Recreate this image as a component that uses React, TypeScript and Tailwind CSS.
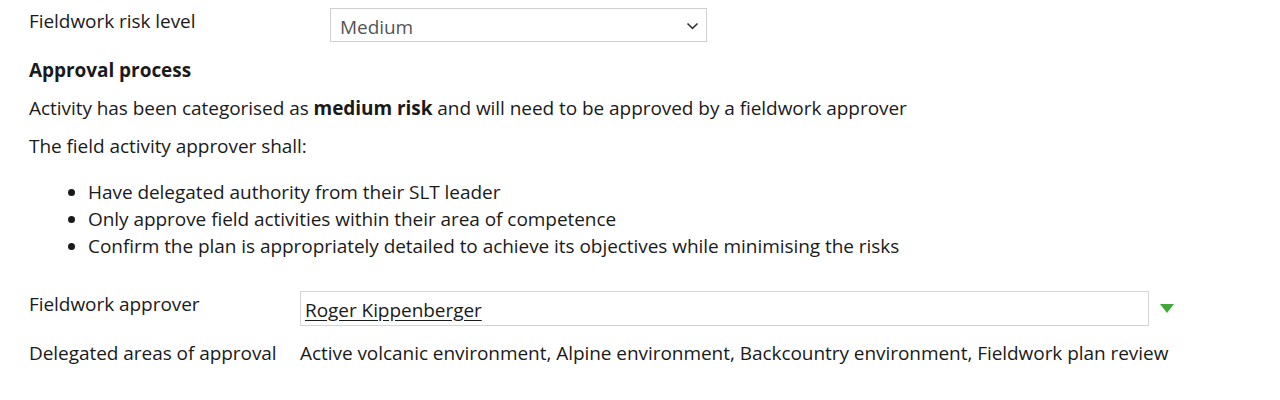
import React from 'react';

const bullets = [
  'Have delegated authority from their SLT leader',
  'Only approve field activities within their area of competence',
  'Confirm the plan is appropriately detailed to achieve its objectives while minimising the risks',
];

export default function App() {
  return (
    <div className="w-[1280px] h-[400px] bg-white text-[#1a1a1a] text-[19px] tracking-[-0.05px] leading-[27px] font-['Open_Sans',sans-serif] pl-[29px] pt-[8px]">
      {/* risk level row */}
      <div className="flex items-start">
        <div className="w-[301px]">Fieldwork risk level</div>
        <div className="w-[377px] h-[34px] border border-[#cfcfcf] flex items-center justify-between pl-[9px] pr-[7px] text-[#555]">
          <span className="pt-[4px]">Medium</span>
          <svg className="mt-[2px]" width="13" height="8" viewBox="0 0 13 8" fill="none">
            <path d="M1.5 1.5 L6.5 6.3 L11.5 1.5" stroke="#333" strokeWidth="1.6" />
          </svg>
        </div>
      </div>

      <h3 className="font-bold mt-[15px]">Approval process</h3>
      <p className="mt-[11px]">
        Activity has been categorised as <b>medium risk</b> and will need to be approved by a fieldwork approver
      </p>
      <p className="mt-[11px]">The field activity approver shall:</p>

      <ul className="list-disc pl-[59px] mt-[19px]">
        {bullets.map((b) => (
          <li key={b}>{b}</li>
        ))}
      </ul>

      {/* approver row */}
      <div className="flex items-start mt-[31px]">
        <div className="w-[271px]">Fieldwork approver</div>
        <div className="w-[849px] h-[35px] border border-[#d4d4d4] pl-[4px] flex items-center">
          <span className="underline underline-offset-[3px] pt-[4px]">Roger Kippenberger</span>
        </div>
        <svg className="ml-[10px] mt-[13px]" width="16" height="9" viewBox="0 0 16 9">
          <path d="M1 0 L15 0 L8 9 Z" fill="#43a83a" />
        </svg>
      </div>

      <div className="flex items-start mt-[14px]">
        <div className="w-[271px]">Delegated areas of approval</div>
        <div>Active volcanic environment, Alpine environment, Backcountry environment, Fieldwork plan review</div>
      </div>
    </div>
  );
}
